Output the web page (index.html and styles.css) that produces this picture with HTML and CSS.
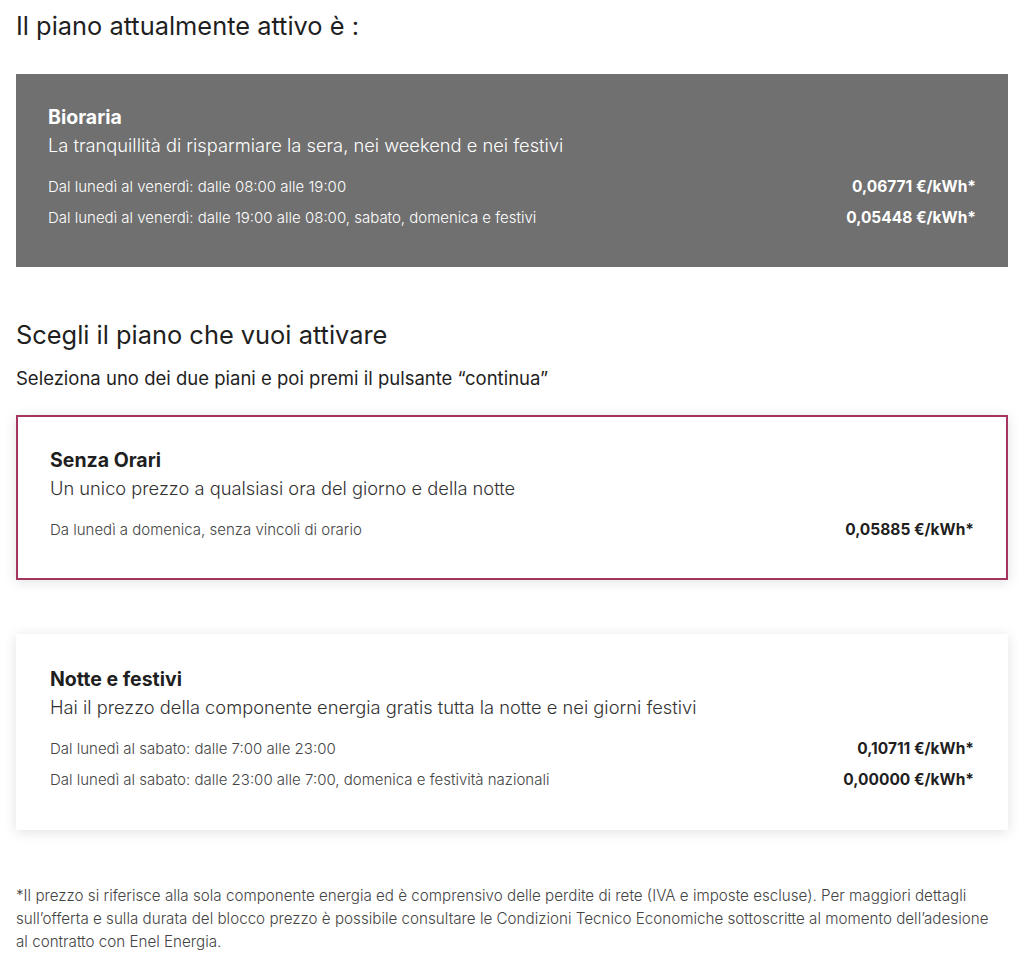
FILE: index.html
```html
<!DOCTYPE html>
<html lang="it">
<head>
    <meta charset="UTF-8">
    <meta name="viewport" content="width=device-width, initial-scale=1.0">
    <title>Cambia piano</title>
    <link rel="stylesheet" href="styles.css">
</head>
<body>
    <div class="page">
        <h1 class="section-title">Il piano attualmente attivo è :</h1>

        <div class="plan plan-active">
            <h2 class="plan-name">Bioraria</h2>
            <p class="plan-desc">La tranquillità di risparmiare la sera, nei weekend e nei festivi</p>
            <div class="plan-rows">
                <div class="plan-row">
                    <span>Dal lunedì al venerdì: dalle 08:00 alle 19:00</span>
                    <strong>0,06771 €/kWh*</strong>
                </div>
                <div class="plan-row">
                    <span>Dal lunedì al venerdì: dalle 19:00 alle 08:00, sabato, domenica e festivi</span>
                    <strong>0,05448 €/kWh*</strong>
                </div>
            </div>
        </div>

        <h1 class="section-title choose">Scegli il piano che vuoi attivare</h1>
        <p class="hint">Seleziona uno dei due piani e poi premi il pulsante “continua”</p>

        <div class="plan plan-option selected">
            <h2 class="plan-name">Senza Orari</h2>
            <p class="plan-desc">Un unico prezzo a qualsiasi ora del giorno e della notte</p>
            <div class="plan-rows">
                <div class="plan-row">
                    <span>Da lunedì a domenica, senza vincoli di orario</span>
                    <strong>0,05885 €/kWh*</strong>
                </div>
            </div>
        </div>

        <div class="plan plan-option">
            <h2 class="plan-name">Notte e festivi</h2>
            <p class="plan-desc">Hai il prezzo della componente energia gratis tutta la notte e nei giorni festivi</p>
            <div class="plan-rows">
                <div class="plan-row">
                    <span>Dal lunedì al sabato: dalle 7:00 alle 23:00</span>
                    <strong>0,10711 €/kWh*</strong>
                </div>
                <div class="plan-row">
                    <span>Dal lunedì al sabato: dalle 23:00 alle 7:00, domenica e festività nazionali</span>
                    <strong>0,00000 €/kWh*</strong>
                </div>
            </div>
        </div>

        <p class="note">*Il prezzo si riferisce alla sola componente energia ed è comprensivo delle perdite di rete (IVA e imposte escluse). Per maggiori dettagli sull’offerta e sulla durata del blocco prezzo è possibile consultare le Condizioni Tecnico Economiche sottoscritte al momento dell’adesione al contratto con Enel Energia.</p>
    </div>
</body>
</html>
```

FILE: styles.css
```css
body {
    margin: 0;
    background-color: #ffffff;
    color: #1f1f1f;
    font-family: Inter, "Noto Sans", sans-serif;
}

.page {
    padding: 8px 16px 20px 16px;
    width: 992px;
    box-sizing: content-box;
}

.section-title {
    font-size: 25.4px;
    font-weight: 400;
    margin: 0 0 30px 0;
    line-height: 36px;
}

.section-title.choose {
    margin: 0;
}

.hint {
    font-size: 18.5px;
    margin: 13px 0 25px 0;
    line-height: 24px;
}

.plan {
    padding: 29px 32px 33px 32px;
    box-sizing: border-box;
}

.plan-active {
    background-color: #707070;
    color: #ffffff;
    padding-bottom: 34px;
    margin-bottom: 50px;
}

.plan-option {
    background-color: #ffffff;
    box-shadow: 0 2px 12px rgba(0, 0, 0, 0.12);
    margin-bottom: 54px;
    border: 2px solid transparent;
}

.plan-option.selected {
    border-color: #a3365f; /* bordo del piano selezionato */
}

.plan-name {
    font-size: 19.5px;
    font-weight: 700;
    margin: 0;
    line-height: 28px;
}

.plan-desc {
    font-size: 18.3px;
    font-weight: 300;
    margin: 0;
    line-height: 28px;
}

.plan-option .plan-desc {
    color: #333333;
}

.plan-rows {
    margin-top: 12px;
}

.plan-row {
    display: flex;
    justify-content: space-between;
    align-items: center;
    font-size: 15px;
    font-weight: 300;
    line-height: 31px;
}

.plan-row strong {
    font-weight: 700;
    font-size: 15.5px;
}

.plan-option .plan-row span {
    color: #444444;
}

.note {
    font-size: 15.2px;
    font-weight: 300;
    line-height: 23px;
    color: #444444;
    margin: 3px 12px 0 0;
}
```
